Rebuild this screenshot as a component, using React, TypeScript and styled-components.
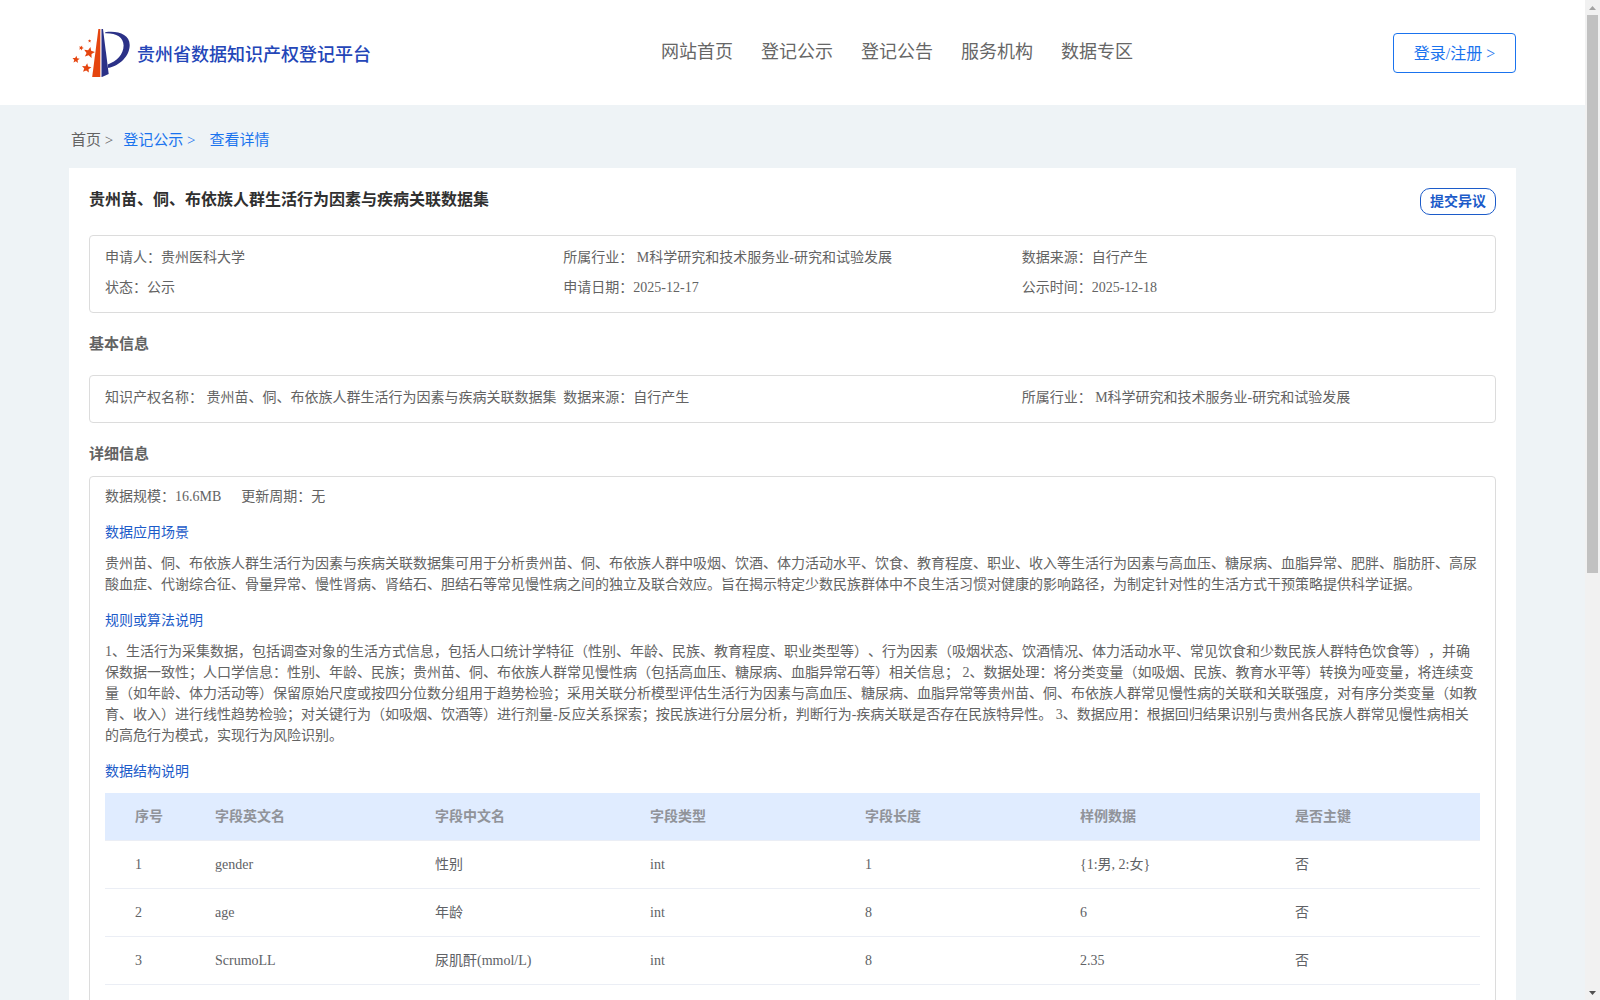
import React from "react";
import styled, { createGlobalStyle } from "styled-components";

const GlobalStyle = createGlobalStyle`
  * { box-sizing: border-box; }
  body {
    margin: 0;
    overflow: hidden;
    background: #eef3f6;
    color: #636363;
    font: 14px "Liberation Serif", "Noto Sans CJK SC", serif;
    text-spacing-trim: space-all;
  }
`;

const Window = styled.div`
  display: flex;
  width: 1600px;
  height: 1000px;
  overflow: hidden;
`;

const Page = styled.div`
  flex: 1;
  height: 1000px;
  overflow: hidden;
`;

const Header = styled.header`
  display: flex;
  justify-content: space-between;
  align-items: flex-start;
  height: 105px;
  padding: 0 69px 0 72px;
  background: #fff;
`;

const Brand = styled.div`
  display: flex;
  width: 589px;
  padding-top: 28px;
`;

const BrandName = styled.h1`
  margin: 0 0 0 7px;
  font-size: 18px;
  font-weight: 500;
  line-height: 54px;
  color: #2446b8;
`;

const Nav = styled.nav`
  display: flex;
  flex: 1;
  gap: 28px;
  padding-top: 37px;
  font-size: 18px;
  line-height: 30px;
  color: #666;
`;

const LoginButton = styled.button`
  width: 123px;
  height: 40px;
  margin-top: 33px;
  padding: 0;
  border: 1px solid #1a73ee;
  border-radius: 4px;
  background: #fff;
  color: #1a73ee;
  font: inherit;
  font-size: 16px;
  line-height: 37px;
`;

const Breadcrumb = styled.div`
  display: flex;
  height: 63px;
  padding-left: 71px;
  font-size: 15px;
  line-height: 71px;
  white-space: pre;
`;

const Crumb = styled.span<{ $active?: boolean; $gap?: number }>`
  margin-right: ${(p) => p.$gap ?? 0}px;
  color: ${(p) => (p.$active ? "#1a73ee" : "#636363")};
`;

const Panel = styled.main`
  width: 1447px;
  min-height: 832px;
  margin-left: 69px;
  padding: 20px 20px 0;
  background: #fff;
`;

const TitleRow = styled.div`
  display: flex;
  justify-content: space-between;
  height: 47px;
`;

const Title = styled.h2`
  margin: 0;
  font-size: 16px;
  line-height: 24px;
  color: #303030;
`;

const ObjectionButton = styled.button`
  width: 76px;
  height: 27px;
  padding: 0;
  border: 1px solid #1c5bc9;
  border-radius: 10px;
  background: #fff;
  color: #1c5bc9;
  font: inherit;
  font-weight: 700;
  line-height: 23px;
`;

const Box = styled.section`
  padding: 7px 15px 9px;
  border: 1px solid #dcdcdc;
  border-radius: 4px;
`;

const InfoGrid = styled(Box)`
  display: grid;
  grid-template-columns: repeat(3, 1fr);
`;

const DetailBox = styled(Box)`
  padding-top: 5px;
`;

const Item = styled.div`
  line-height: 30px;
  white-space: pre;
`;

const SectionTitle = styled.h3<{ $height: number }>`
  height: ${(p) => p.$height}px;
  margin: 0;
  font-size: 15px;
  line-height: 62px;
`;

const Meta = styled.div`
  display: flex;
  gap: 20px;
`;

const SubTitle = styled.h4<{ $height: number; $line: number }>`
  height: ${(p) => p.$height}px;
  margin: 0;
  font-weight: 400;
  line-height: ${(p) => p.$line}px;
  color: #1c5bc9;
`;

const Paragraph = styled.p`
  margin: 0;
  line-height: 21px;
  white-space: pre;
`;

const TableRow = styled.div<{ $head?: boolean }>`
  display: grid;
  grid-template-columns: 80px 220px 215px 215px 215px 215px 1fr;
  height: 48px;
  padding-left: 30px;
  border-bottom: 1px solid #ebeef5;
  background: ${(p) => (p.$head ? "#e0ecff" : "#fff")};
  color: ${(p) => (p.$head ? "#909399" : "#606266")};
  font-weight: ${(p) => (p.$head ? 700 : 400)};
  line-height: 47px;
`;

const ScrollTrack = styled.div`
  display: flex;
  flex-direction: column;
  align-items: center;
  width: 15px;
  background: #f1f1f1;
`;

const ScrollThumb = styled.div`
  width: 11px;
  height: 558px;
  margin: 0 0 auto;
  background: #c1c1c1;
`;

const nav = ["网站首页", "登记公示", "登记公告", "服务机构", "数据专区"];

const summary = [
  "申请人：贵州医科大学",
  "所属行业： M科学研究和技术服务业-研究和试验发展",
  "数据来源：自行产生",
  "状态：公示",
  "申请日期：2025-12-17",
  "公示时间：2025-12-18",
];

const basic = [
  "知识产权名称： 贵州苗、侗、布依族人群生活行为因素与疾病关联数据集",
  "数据来源：自行产生",
  "所属行业： M科学研究和技术服务业-研究和试验发展",
];

const scene = [
  "贵州苗、侗、布依族人群生活行为因素与疾病关联数据集可用于分析贵州苗、侗、布依族人群中吸烟、饮酒、体力活动水平、饮食、教育程度、职业、收入等生活行为因素与高血压、糖尿病、血脂异常、肥胖、脂肪肝、高尿",
  "酸血症、代谢综合征、骨量异常、慢性肾病、肾结石、胆结石等常见慢性病之间的独立及联合效应。旨在揭示特定少数民族群体中不良生活习惯对健康的影响路径，为制定针对性的生活方式干预策略提供科学证据。",
].join("\n");

const rules = [
  "1、生活行为采集数据，包括调查对象的生活方式信息，包括人口统计学特征（性别、年龄、民族、教育程度、职业类型等）、行为因素（吸烟状态、饮酒情况、体力活动水平、常见饮食和少数民族人群特色饮食等），并确",
  "保数据一致性；人口学信息：性别、年龄、民族；贵州苗、侗、布依族人群常见慢性病（包括高血压、糖尿病、血脂异常石等）相关信息； 2、数据处理：将分类变量（如吸烟、民族、教育水平等）转换为哑变量，将连续变",
  "量（如年龄、体力活动等）保留原始尺度或按四分位数分组用于趋势检验；采用关联分析模型评估生活行为因素与高血压、糖尿病、血脂异常等贵州苗、侗、布依族人群常见慢性病的关联和关联强度，对有序分类变量（如教",
  "育、收入）进行线性趋势检验；对关键行为（如吸烟、饮酒等）进行剂量-反应关系探索；按民族进行分层分析，判断行为-疾病关联是否存在民族特异性。 3、数据应用：根据回归结果识别与贵州各民族人群常见慢性病相关",
  "的高危行为模式，实现行为风险识别。",
].join("\n");

const columns = ["序号", "字段英文名", "字段中文名", "字段类型", "字段长度", "样例数据", "是否主键"];

const rows = [
  ["1", "gender", "性别", "int", "1", "{1:男, 2:女}", "否"],
  ["2", "age", "年龄", "int", "8", "6", "否"],
  ["3", "ScrumoLL", "尿肌酐(mmol/L)", "int", "8", "2.35", "否"],
];

const starPoints = (cx: number, cy: number, r: number, turn: number) =>
  Array.from({ length: 10 }, (_, i) => {
    const radius = i % 2 ? r * 0.46 : r;
    const a = ((turn + i * 36 - 90) * Math.PI) / 180;
    return `${(cx + radius * Math.cos(a)).toFixed(2)},${(cy + radius * Math.sin(a)).toFixed(2)}`;
  }).join(" ");

const Logo = () => (
  <svg width="58" height="50" viewBox="0 0 58 50">
    <g fill="#e5450f">
      <path d="M26.4 1H28.3V49H20.2Z" />
      <polygon points={starPoints(17.2, 24.6, 5.8, 12)} />
      <polygon points={starPoints(14.5, 40.2, 5, 8)} />
      <polygon points={starPoints(4, 31.6, 3.8, 6)} />
      <polygon points={starPoints(9.2, 20, 2.6, 20)} />
      <polygon points={starPoints(17.6, 13, 1.7, 0)} />
    </g>
    <g fill="#2b3187">
      <path d="M29.5 1H31L36.7 46L30 49H29.5Z" />
      <path d="M33.2 4.3C45 2.4 57.7 6 57.7 17C57.7 28 48 37.5 36.2 40L35.8 36.4C44.5 33.5 51.6 26.5 51.6 17.5C51.6 9 44 4.9 33.2 5.2Z" />
    </g>
  </svg>
);

const ScrollArrow = ({ down }: { down?: boolean }) => (
  <svg width="15" height="15" viewBox="0 0 15 15">
    <path d={down ? "M4 6H11L7.5 10Z" : "M4 10H11L7.5 6Z"} fill={down ? "#505050" : "#a3a3a3"} />
  </svg>
);

export default function App() {
  return (
    <Window lang="zh-CN">
      <GlobalStyle />
      <Page>
        <Header>
          <Brand>
            <Logo />
            <BrandName>贵州省数据知识产权登记平台</BrandName>
          </Brand>
          <Nav>
            {nav.map((n) => (
              <span key={n}>{n}</span>
            ))}
          </Nav>
          <LoginButton>登录/注册 &gt;</LoginButton>
        </Header>
        <Breadcrumb>
          <Crumb $gap={10}>首页 &gt;</Crumb>
          <Crumb $active $gap={14}>登记公示 &gt;</Crumb>
          <Crumb $active>查看详情</Crumb>
        </Breadcrumb>
        <Panel>
          <TitleRow>
            <Title>贵州苗、侗、布依族人群生活行为因素与疾病关联数据集</Title>
            <ObjectionButton>提交异议</ObjectionButton>
          </TitleRow>
          <InfoGrid>
            {summary.map((s) => (
              <Item key={s}>{s}</Item>
            ))}
          </InfoGrid>
          <SectionTitle $height={62}>基本信息</SectionTitle>
          <InfoGrid>
            {basic.map((s) => (
              <Item key={s}>{s}</Item>
            ))}
          </InfoGrid>
          <SectionTitle $height={53}>详细信息</SectionTitle>
          <DetailBox>
            <Meta>
              <Item>数据规模：16.6MB</Item>
              <Item>更新周期：无</Item>
            </Meta>
            <SubTitle $height={41} $line={42}>数据应用场景</SubTitle>
            <Paragraph>{scene}</Paragraph>
            <SubTitle $height={46} $line={52}>规则或算法说明</SubTitle>
            <Paragraph>{rules}</Paragraph>
            <SubTitle $height={47} $line={52}>数据结构说明</SubTitle>
            <TableRow $head>
              {columns.map((c) => (
                <span key={c}>{c}</span>
              ))}
            </TableRow>
            {rows.map((r) => (
              <TableRow key={r[0]}>
                {r.map((cell, i) => (
                  <span key={i}>{cell}</span>
                ))}
              </TableRow>
            ))}
            <TableRow />
          </DetailBox>
        </Panel>
      </Page>
      <ScrollTrack>
        <ScrollArrow />
        <ScrollThumb />
        <ScrollArrow down />
      </ScrollTrack>
    </Window>
  );
}
